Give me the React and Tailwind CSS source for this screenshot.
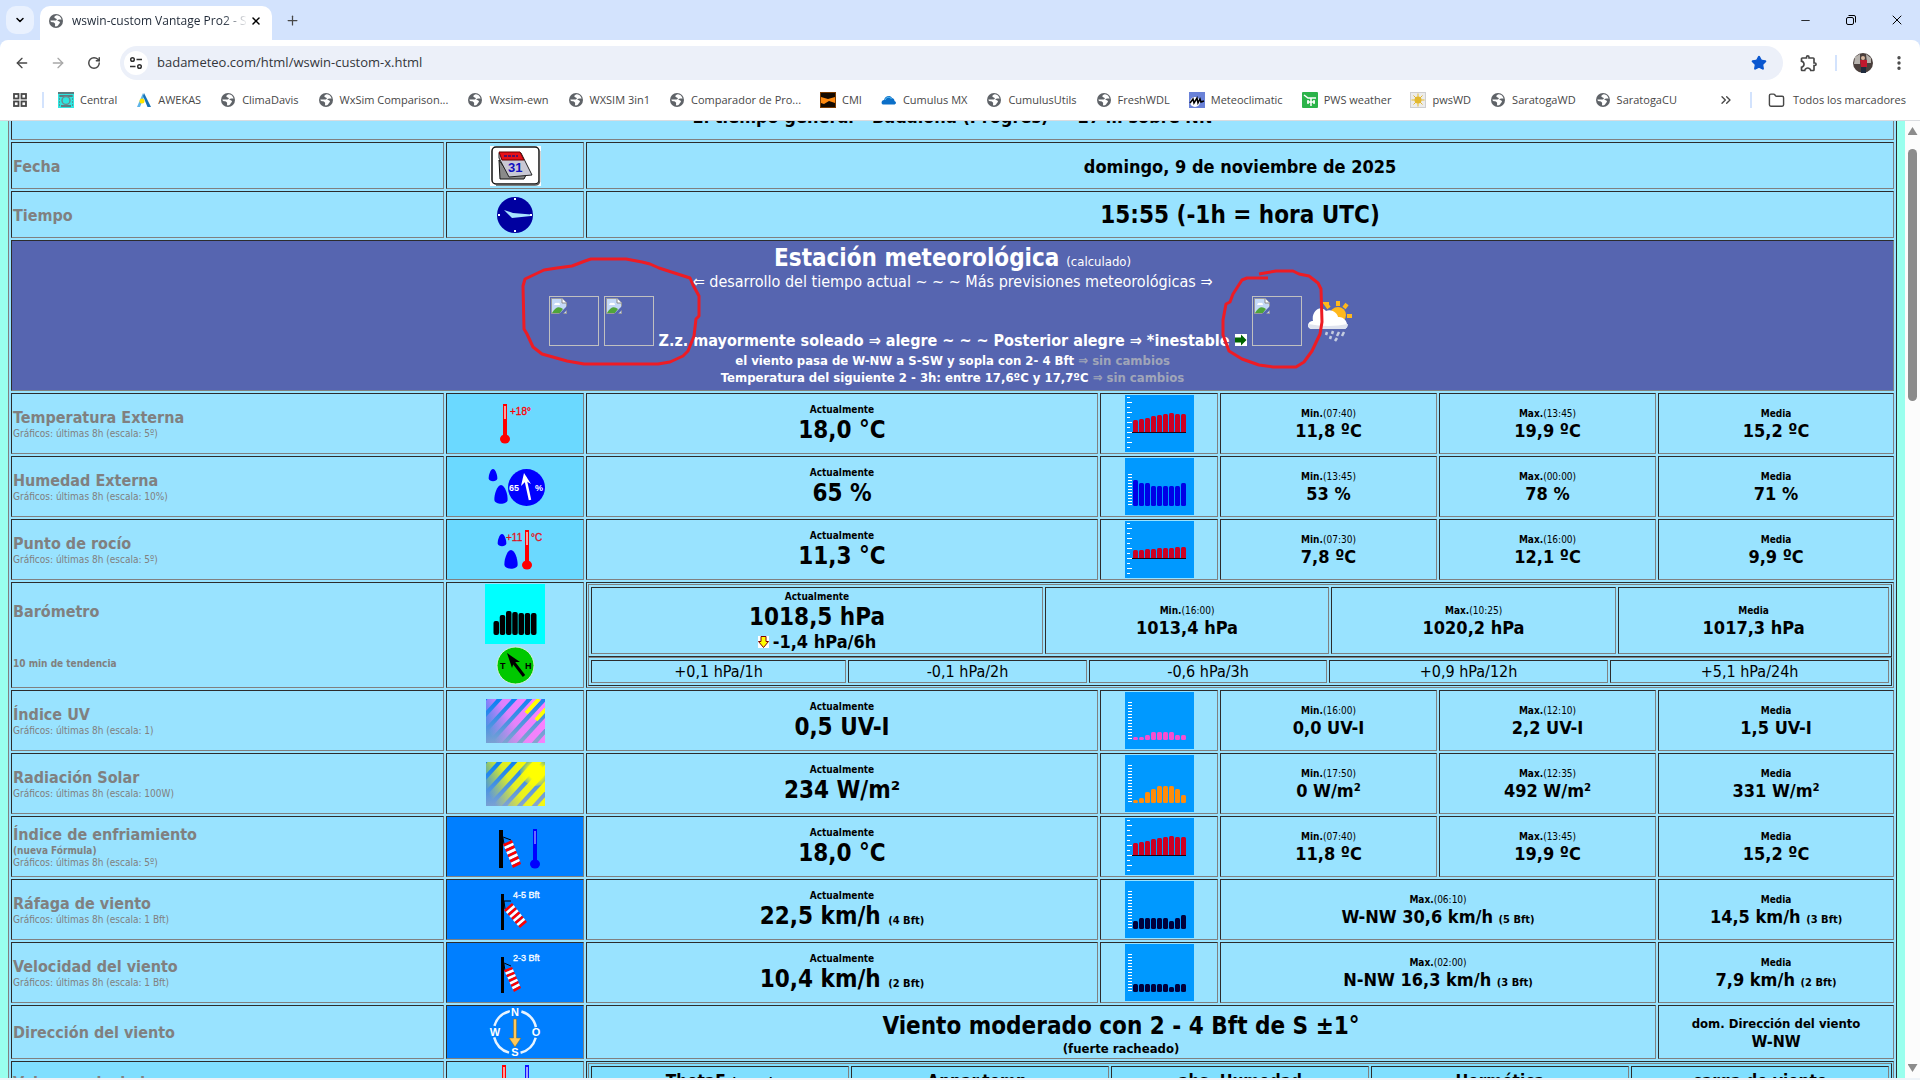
import React from "react";
import { ArrowLeft, ArrowRight, RotateCw, Plus, X, Minus, Star, ChevronDown, ChevronsRight, Folder, EllipsisVertical } from "lucide-react";
import { MdOutlineExtension } from "react-icons/md";

/* ── SHARED CLASSES ── */
const INSET = "border border-t-[#2c2c2c] border-l-[#2c2c2c] border-b-[#808080] border-r-[#808080] p-px";
const OUTSET = "border border-t-[#808080] border-l-[#808080] border-b-[#2c2c2c] border-r-[#2c2c2c]";
const TABLE = "w-full table-fixed border-separate border-spacing-0.5";

/* ── BOOKMARK ICONS ── */
const Globe = () => (
  <svg className="size-4 shrink-0" viewBox="0 0 16 16">
    <circle cx="8" cy="8" r="7" fill="#5f6368" />
    <path d="M9 2.2 C6 3 5.6 4.6 7.6 5.4 C9.6 6 9 7.4 7 7.4 L2.4 7.6 C2.6 10 5 9 6.4 10 C8 11 6.4 12 7.4 13.6 C10 13.6 10.4 11.6 11.6 10.2 C12.8 8.8 11 8.2 9.8 8 C8.8 7.6 10 6.4 11.6 6.6 L13.6 6.6 C13 4 11.4 2.6 9 2.2Z" fill="#fff" />
  </svg>
);

const CentralIcon = () => (
  <svg className="size-4 shrink-0" viewBox="0 0 16 16">
    <rect width="16" height="16" fill="#2ee6e0" />
    <path d="M0 1h16M2 4h12M3 14h10" stroke="#5d7c80" strokeWidth="2" />
    <circle cx="8" cy="8.5" r="4" fill="none" stroke="#6b8a8e" strokeWidth="1.5" />
    <path d="M1.5 3v12M14.500 3v12" stroke="#4b9c9c" strokeDasharray="2 1" />
  </svg>
);

const AwekasIcon = () => (
  <svg className="size-4 shrink-0" viewBox="0 0 16 16">
    <path d="M7 1 L1 15 H4 L8 5Z" fill="#5db4e8" />
    <path d="M8 1 L15 15 H11.500 L7 4Z" fill="#1673b8" />
    <circle cx="6" cy="9" r="2.500" fill="#ffe600" />
  </svg>
);

const CmiIcon = () => (
  <svg className="size-4 shrink-0" viewBox="0 0 16 16">
    <rect width="16" height="16" fill="#150a00" />
    <path d="M1 5 L8 7 L15 5 V11 L9 9 L4 12 L1 11Z" fill="#ff8a10" />
    <rect x="0.5" y="0.5" width="15" height="15" fill="none" stroke="#7a3b00" />
  </svg>
);

const CumulusIcon = () => (
  <svg className="size-4 shrink-0" viewBox="0 0 16 16">
    <path d="M2 12.500 C0 12 0 8.500 3 8 C4 4 9 2.500 11 6 C13 6.500 13.500 8 13.500 9 C16 10 15 12.500 13 12.500Z" fill="#0b6fc8" />
    <path d="M4 8 C5 5 9 4 10.500 7" stroke="#5fc3f5" fill="none" />
  </svg>
);

const MeteoclimaticIcon = () => (
  <svg className="size-4 shrink-0" viewBox="0 0 16 16">
    <rect width="16" height="16" fill="#6a82d8" />
    <circle cx="6" cy="10" r="5" fill="#fff" />
    <path d="M1 11 L4 7 L5 11 L8 6 L9 11 L11 7 L12 10 L15 9" stroke="#000" strokeWidth="1.500" fill="none" />
  </svg>
);

const PwsIcon = () => (
  <svg className="size-4 shrink-0" viewBox="0 0 16 16">
    <rect width="16" height="16" rx="1" fill="#2cb34a" />
    <path d="M2 3 L6 6 H14 M9 6 V14 M5 10 H13 M6 8 V12 M12 8 V12" stroke="#fff" strokeWidth="1.500" fill="none" />
  </svg>
);

const SunIcon = () => (
  <svg className="size-4 shrink-0" viewBox="0 0 16 16">
    <rect x="0.5" y="0.5" width="15" height="15" fill="#ececec" stroke="#cfcfcf" />
    <circle cx="8" cy="8" r="3.500" fill="#e3b92f" />
    <path d="M8 1.500V14.500M1.500 8H14.500M3.500 3.500L12.500 12.500M12.500 3.500L3.500 12.500" stroke="#e3b92f" />
  </svg>
);

const BOOKMARKS = [
  { label: "Central", icon: CentralIcon },
  { label: "AWEKAS", icon: AwekasIcon },
  { label: "ClimaDavis", icon: Globe },
  { label: "WxSim Comparison...", icon: Globe },
  { label: "Wxsim-ewn", icon: Globe },
  { label: "WXSIM 3in1", icon: Globe },
  { label: "Comparador de Pro...", icon: Globe },
  { label: "CMI", icon: CmiIcon },
  { label: "Cumulus MX", icon: CumulusIcon },
  { label: "CumulusUtils", icon: Globe },
  { label: "FreshWDL", icon: Globe },
  { label: "Meteoclimatic", icon: MeteoclimaticIcon },
  { label: "PWS weather", icon: PwsIcon },
  { label: "pwsWD", icon: SunIcon },
  { label: "SaratogaWD", icon: Globe },
  { label: "SaratogaCU", icon: Globe },
];

/* ── SENSOR ICONS ── */
const Thermometer = ({ x, y, color = "#ff0000", light = "#ff9c9c" }) => (
  <g>
    <rect x={x - 2} y={y} width="4" height="33" fill={color} />
    <rect x={x - 1} y={y + 2} width="2" height="13" fill={light} />
    <ellipse cx={x} cy={y + 35} rx="5" ry="4.500" fill={color} />
  </g>
);

const Drop = ({ x, y, h }) => (
  <path
    d={`M${x} ${y} C${x + h * 0.2} ${y} ${x + h * 0.35} ${y + h * 0.5} ${x + h * 0.33} ${y + h * 0.75} C${x + h * 0.3} ${y + h} ${x - h * 0.3} ${y + h} ${x - h * 0.33} ${y + h * 0.75} C${x - h * 0.35} ${y + h * 0.5} ${x - h * 0.2} ${y} ${x} ${y}Z`}
    fill="#0000ff"
  />
);

const IconBox = ({ children }) => (
  <svg className="mx-auto h-14 w-15 font-[family-name:'Liberation_Sans',sans-serif]" viewBox="0 0 60 56">{children}</svg>
);

const TempIcon = () => (
  <IconBox>
    <Thermometer x={20} y={8} />
    <text x="25" y="19" fontSize="10" fill="#ff0000" stroke="#ff0000" strokeWidth="0.3">+18°</text>
  </IconBox>
);

const HumidityIcon = () => (
  <IconBox>
    <Drop x={8} y={10} h={13} />
    <Drop x={16} y={26} h={20} />
    <circle cx="41.500" cy="28.500" r="18.500" fill="#0000ff" />
    <path d="M45 41 L40 18" stroke="#fff" strokeWidth="2.500" />
    <path d="M39 14 L46 25 L41 22 L36 27Z" fill="#fff" />
    <text x="24" y="32" fontSize="9" fontWeight="bold" fill="#fff">65</text>
    <text x="50" y="32" fontSize="9" fontWeight="bold" fill="#fff">%</text>
  </IconBox>
);

const DewIcon = () => (
  <IconBox>
    <Drop x={17} y={12} h={13} />
    <Drop x={26} y={28} h={20} />
    <Thermometer x={42} y={8} />
    <text x="21" y="19" fontSize="10" fill="#e01020" stroke="#e01020" strokeWidth="0.3">+11</text>
    <text x="46" y="19" fontSize="10" fill="#e01020" stroke="#e01020" strokeWidth="0.3">°C</text>
  </IconBox>
);

const BARO_TOPS = [37, 31, 27, 28, 29, 29, 29];

const BarometerIcon = () => (
  <svg className="mx-auto h-[102px] w-15 font-[family-name:'Liberation_Sans',sans-serif]" viewBox="0 0 60 102">
    <rect width="60" height="60" fill="#00ffff" />
    {BARO_TOPS.map((top, i) => (
      <rect key={i} x={8.500 + i * 6.250} y={top} width="5.500" height={51 - top} rx="2" fill="#000" />
    ))}
    <circle cx="30.500" cy="81.500" r="18.500" fill="#00c800" stroke="#d8f0d8" />
    <path d="M39 92 L26 75" stroke="#000" strokeWidth="3" />
    <path d="M22 69 L35 78 L29 78 L27 84Z" fill="#000" />
    <text x="15" y="85" fontSize="9" fontWeight="bold">T</text>
    <text x="40" y="85" fontSize="9" fontWeight="bold">H</text>
  </svg>
);

const Rays = ({ id, color, spot }) => (
  <svg className="mx-auto h-11 w-[59px]" viewBox="0 0 59 44">
    <defs>
      <linearGradient id={`${id}-sky`} x1="0.3" y1="0" x2="0.5" y2="1">
        <stop offset="0" stopColor="#0a80f5" />
        <stop offset="1" stopColor="#84a4d0" />
      </linearGradient>
      <linearGradient id={`${id}-ray`} gradientUnits="userSpaceOnUse" x1="54" y1="6" x2="6" y2="38">
        <stop offset="0" stopColor={color} />
        <stop offset="0.55" stopColor={color} stopOpacity="0.85" />
        <stop offset="1" stopColor={color} stopOpacity="0" />
      </linearGradient>
      <radialGradient id={`${id}-sun`} gradientUnits="userSpaceOnUse" cx="50" cy="10" r="18">
        <stop offset="0.4" stopColor="#ffff00" />
        <stop offset="1" stopColor="#ffff00" stopOpacity="0" />
      </radialGradient>
      <clipPath id={`${id}-clip`}><rect width="59" height="44" /></clipPath>
    </defs>
    <rect width="59" height="44" fill={`url(#${id}-sky)`} />
    <g clipPath={`url(#${id}-clip)`}>
      {Array.from({ length: 9 }).map((_, i) => (
        <path key={i} d={`M${i * 15 - 36} 46 l44 -48`} stroke={`url(#${id}-ray)`} strokeWidth="7" />
      ))}
      {spot === "full" && <circle cx="50" cy="8" r="16" fill={`url(#${id}-sun)`} />}
      {spot === "thin" && <path d="M40 14 L53 0 M50 21 L60 10" stroke="#ffff00" strokeWidth="4" />}
    </g>
  </svg>
);

const UvIcon = () => <Rays id="uv" color="#ff80ff" spot="thin" />;
const SolarIcon = () => <Rays id="solar" color="#ffff00" spot="full" />;

/* striped windsock: four corners a-b (mouth) and c-d (tail) */
const Sock = ({ a, b, c, d }) => {
  const mix = (p, q, t) => `${p[0] + (q[0] - p[0]) * t},${p[1] + (q[1] - p[1]) * t}`;
  return (
    <g>
      {Array.from({ length: 9 }).map((_, i) => (
        <polygon
          key={i}
          points={`${mix(a, d, i / 9)} ${mix(b, c, i / 9)} ${mix(b, c, (i + 1) / 9)} ${mix(a, d, (i + 1) / 9)}`}
          fill={i % 2 ? "#ffffff" : "#ff0000"}
        />
      ))}
    </g>
  );
};

const ChillIcon = () => (
  <IconBox>
    <rect x="14" y="11" width="4" height="38" fill="#000" />
    <path d="M18 18 L26 21 M18 19 L19 25" stroke="#000" fill="none" />
    <Sock a={[18, 25]} b={[27, 21]} c={[36, 45]} d={[28, 49]} />
    <Thermometer x={50} y={10} color="#0000ff" light="#6a6aff" />
  </IconBox>
);

const GustIcon = () => (
  <IconBox>
    <rect x="16" y="12" width="3" height="36" fill="#000" />
    <path d="M19 19 H26 M19 19 L20 27" stroke="#000" fill="none" />
    <Sock a={[19, 28]} b={[27, 21]} c={[42, 40]} d={[35, 46]} />
    <text x="28" y="16" fontSize="9" fill="#fff" stroke="#fff" strokeWidth="0.3">4-5 Bft</text>
  </IconBox>
);

const SpeedIcon = () => (
  <IconBox>
    <rect x="16" y="12" width="3" height="36" fill="#000" />
    <path d="M19 18 L26 21 M19 19 L20 26" stroke="#000" fill="none" />
    <Sock a={[19, 25]} b={[27, 22]} c={[36, 43]} d={[29, 47]} />
    <text x="28" y="16" fontSize="9" fill="#fff" stroke="#fff" strokeWidth="0.3">2-3 Bft</text>
  </IconBox>
);

const CompassIcon = () => (
  <svg className="mx-auto h-[50px] w-15 font-[family-name:'Liberation_Sans',sans-serif]" viewBox="0 0 60 50">
    <circle cx="30" cy="25" r="21.500" fill="none" stroke="#e8f4ff" strokeWidth="2.500" strokeDasharray="22 11.770" strokeDashoffset="-5.880" />
    <path d="M28.500 12 H31.500 V31 H36 L30 40 L24 31 H28.500Z" fill="#ffc85a" stroke="#7d6a2a" strokeWidth="0.5" />
    <g fontSize="11" fontWeight="bold" fill="#fff" textAnchor="middle">
      <text x="30" y="9">N</text>
      <text x="30" y="49">S</text>
      <text x="10" y="29">W</text>
      <text x="51" y="29">O</text>
    </g>
  </svg>
);

const CalendarIcon = () => (
  <svg className="mx-auto h-10 w-[51px] font-[family-name:'Liberation_Sans',sans-serif]" viewBox="0 0 51 40">
    <rect width="51" height="40" fill="#fff" />
    <rect x="2" y="1" width="47" height="37" rx="4" fill="#fff" stroke="#111" strokeWidth="1.500" />
    <path d="M49.500 5 V36 Q49 39 45 39 H6" fill="none" stroke="#555" strokeWidth="1.500" />
    <path d="M9 14 L10 33 H34 L36 29 L18 27Z" fill="#8a8a8a" stroke="#111" />
    <path d="M9 7 H31 L42 29 L19 31 L9 12Z" fill="#c9c9d4" stroke="#222" />
    <path d="M9 6 H30 L34 14 H12Z" fill="#e81018" stroke="#600" />
    <path d="M14 10 h14" stroke="#5a1060" strokeWidth="2" strokeDasharray="3 1" />
    <text x="18" y="26" fontSize="13" fontWeight="bold" fill="#1010c0">31</text>
  </svg>
);

const ClockIcon = () => (
  <svg className="mx-auto h-10 w-10" viewBox="0 0 40 40">
    <circle cx="20" cy="20" r="18" fill="#0000a0" />
    <path d="M9 15 L18 18 L36 19.500 V21 L17 23Z" fill="#a8e4ff" />
    <path d="M20 3v2M20 35v2M3 20h2M35 20h2" stroke="#fff" strokeWidth="2" />
  </svg>
);

/* ── MINI BAR CHART (last 8 hours) ── */
const LONG_TICKS = [2, 7, 12, 17, 22, 27, 32, 37, 42, 47, 52];

const MiniChart = ({ color, tops, kind }) => {
  const axis = kind === "temp";
  const bottom = axis ? 37 : 48;
  const first = kind === "percent" ? 16 : 10;
  const ticks = axis ? LONG_TICKS : Array.from({ length: (46 - first) / 3 + 1 }).map((_, i) => first + i * 3);
  return (
    <svg className="mx-auto h-[57px] w-[69px]" viewBox="0 0 69 57">
      <rect width="69" height="57" fill="#0099ff" />
      {ticks.map((y, i) => (
        <rect key={y} x={axis ? 2 : 3} y={y} width={axis && i % 2 === 0 ? 3 : axis ? 5 : 4} height="1" fill="#fff" />
      ))}
      {tops.map((top, i) => (
        <g key={i}>
          <rect x={8 + i * 6} y={top} width="5" height={bottom - top} rx="1.500" fill={color} />
          {axis && <rect x={8 + i * 6} y="34" width="5" height="3" fill={color} />}
        </g>
      ))}
      {axis && <rect x="7" y="37" width="54" height="1" fill="#200010" />}
    </svg>
  );
};

/* ── DATA ── */
const WARM = [25, 24, 23, 21, 20, 19, 18, 19, 19];

const TOP_ROWS = [
  {
    name: "Temperatura Externa", scale: "5º", icon: TempIcon, tone: "light", now: "18,0 °C",
    chart: { kind: "temp", color: "#cc0022", tops: WARM },
    min: ["07:40", "11,8 ºC"], max: ["13:45", "19,9 ºC"], avg: "15,2 ºC",
  },
  {
    name: "Humedad Externa", scale: "10%", icon: HumidityIcon, tone: "light", now: "65 %",
    chart: { kind: "percent", color: "#0000e6", tops: [22, 25, 25, 28, 28, 28, 28, 28, 25] },
    min: ["13:45", "53 %"], max: ["00:00", "78 %"], avg: "71 %",
  },
  {
    name: "Punto de rocío", scale: "5º", icon: DewIcon, tone: "light", now: "11,3 °C",
    chart: { kind: "temp", color: "#cc0022", tops: [29, 29, 28, 28, 27, 27, 27, 26, 26] },
    min: ["07:30", "7,8 ºC"], max: ["16:00", "12,1 ºC"], avg: "9,9 ºC",
  },
];

const BOTTOM_ROWS = [
  {
    name: "Índice UV", scale: "1", icon: UvIcon, now: "0,5 UV-I",
    chart: { kind: "scale", color: "#f54fd0", tops: [45, 45, 43, 40, 40, 40, 40, 43, 43] },
    min: ["16:00", "0,0 UV-I"], max: ["12:10", "2,2 UV-I"], avg: "1,5 UV-I",
  },
  {
    name: "Radiación Solar", scale: "100W", icon: SolarIcon, now: "234 W/m²",
    chart: { kind: "scale", color: "#ff8c0a", tops: [45, 43, 37, 34, 31, 31, 31, 34, 40] },
    min: ["17:50", "0 W/m²"], max: ["12:35", "492 W/m²"], avg: "331 W/m²",
  },
  {
    name: "Índice de enfriamiento", note: "(nueva Fórmula)", scale: "5º", icon: ChillIcon, tone: "blue", now: "18,0 °C",
    chart: { kind: "temp", color: "#cc0022", tops: WARM },
    min: ["07:40", "11,8 ºC"], max: ["13:45", "19,9 ºC"], avg: "15,2 ºC",
  },
  {
    name: "Ráfaga de viento", scale: "1 Bft", icon: GustIcon, tone: "blue", now: "22,5 km/h", nowBft: "(4 Bft)",
    chart: { kind: "scale", color: "#00003c", tops: [40, 37, 37, 37, 37, 37, 40, 37, 34] },
    max: ["06:10", "W-NW 30,6 km/h", "(5 Bft)"], avg: "14,5 km/h", avgBft: "(3 Bft)",
  },
  {
    name: "Velocidad del viento", scale: "1 Bft", icon: SpeedIcon, tone: "blue", now: "10,4 km/h", nowBft: "(2 Bft)",
    chart: { kind: "scale", color: "#00003c", tops: [40, 40, 40, 40, 40, 40, 43, 40, 40] },
    max: ["02:00", "N-NW 16,3 km/h", "(3 Bft)"], avg: "7,9 km/h", avgBft: "(2 Bft)",
  },
];

const TONES = { light: "bg-[#6bd9ff]", blue: "bg-[#007fff]" };

/* ── TABLE PIECES ── */
const Bft = ({ children }) => <span className="text-[11px] leading-none"> {children}</span>;

const Stat = ({ label, time, value, bft }) => (
  <>
    <div className="pt-0.5 text-[10px] leading-3"><b>{label}</b>{time && `(${time})`}</div>
    <div className="text-lg leading-[22px] font-bold">{value}{bft && <> <Bft>{bft}</Bft></>}</div>
  </>
);

const Current = ({ value, bft }) => (
  <>
    <div className="pt-0.5 text-[10px] leading-3 font-bold">Actualmente</div>
    <div className="text-2xl leading-[29px] font-bold">{value}{bft && <> <Bft>{bft}</Bft></>}</div>
  </>
);

const RowLabel = ({ children }) => (
  <th scope="row" className={`${INSET} text-left font-normal text-[#808080]`}>{children}</th>
);

const SensorRow = ({ row }) => {
  const Icon = row.icon;
  return (
    <tr className="h-[61px]">
      <RowLabel>
        <div className="text-base leading-5 font-bold">{row.name}</div>
        {row.note && <div className="text-[10px] leading-3 font-bold">{row.note}</div>}
        <div className="text-[10px] leading-3">Gráficos: últimas 8h (escala: {row.scale})</div>
      </RowLabel>
      <td className={`${INSET} ${TONES[row.tone] || ""}`}><Icon /></td>
      <td className={INSET}><Current value={row.now} bft={row.nowBft} /></td>
      <td className={INSET}><MiniChart {...row.chart} /></td>
      {row.min && <td className={INSET}><Stat label="Min." time={row.min[0]} value={row.min[1]} /></td>}
      <td className={INSET} colSpan={row.min ? 1 : 2}>
        <Stat label="Max." time={row.max[0]} value={row.max[1]} bft={row.max[2]} />
      </td>
      <td className={INSET}><Stat label="Media" value={row.avg} bft={row.avgBft} /></td>
    </tr>
  );
};

const BarometerRow = () => (
  <tr className="h-[106px]">
    <RowLabel>
      <div className="flex flex-col gap-9 pt-0.5">
        <span className="text-base leading-5 font-bold">Barómetro</span>
        <span className="text-[10px] leading-3 font-bold">10 min de tendencia</span>
      </div>
    </RowLabel>
    <td className={INSET}><BarometerIcon /></td>
    <td className={INSET} colSpan={5}>
      <table className={`${TABLE} ${OUTSET}`}>
        <colgroup>
          <col className="w-[452px]" />
          <col className="w-[284px]" />
          <col className="w-[285px]" />
          <col className="w-[271px]" />
        </colgroup>
        <tbody>
          <tr className="h-[67px]">
            <td className={INSET}>
              <Current value="1018,5 hPa" />
              <div className="text-lg leading-5 font-bold">
                <svg className="mr-1 inline h-3 w-[11px] align-baseline" viewBox="0 0 11 12">
                  <rect width="11" height="12" fill="#fff" />
                  <path d="M3 0.5 H8 V5.500 H10.500 L5.500 11.500 L0.5 5.500 H3Z" fill="#ffff00" stroke="#800000" />
                </svg>
                -1,4 hPa/6h
              </div>
            </td>
            <td className={INSET}><Stat label="Min." time="16:00" value="1013,4 hPa" /></td>
            <td className={INSET}><Stat label="Max." time="10:25" value="1020,2 hPa" /></td>
            <td className={INSET}><Stat label="Media" value="1017,3 hPa" /></td>
          </tr>
        </tbody>
      </table>
      <table className={`${TABLE} ${OUTSET}`}>
        <colgroup>
          <col className="w-[255px]" />
          <col className="w-[239px]" />
          <col className="w-[238px]" />
          <col className="w-[279px]" />
          <col className="w-[279px]" />
        </colgroup>
        <tbody>
          <tr className="h-[23px]">
            {["+0,1 hPa/1h", "-0,1 hPa/2h", "-0,6 hPa/3h", "+0,9 hPa/12h", "+5,1 hPa/24h"].map((t) => (
              <td key={t} className={`${INSET} text-base leading-[19px]`}>{t}</td>
            ))}
          </tr>
        </tbody>
      </table>
    </td>
  </tr>
);

const MissingImage = () => (
  <svg className="mr-[5px] inline size-[50px] align-baseline" viewBox="0 0 50 50">
    <rect x="0.5" y="0.5" width="49" height="49" fill="none" stroke="#c0c0c0" />
    <path d="M2.500 2.500 H13 L17.500 7 V17.500 H2.500Z" fill="#c5d9f7" stroke="#9a9a9a" />
    <path d="M5 9 Q6 6 8 7 Q11 6 11 9Z" fill="#fff" />
    <path d="M3 17 Q8 8 14 13 L11 17Z" fill="#4fa53a" />
    <path d="M10 18 L18 10 V14 L14 18Z" fill="#5665b0" />
    <path d="M13 2.500 V7 H17.500" fill="#fff" stroke="#8a8a8a" />
  </svg>
);

const RainIcon = () => (
  <svg className="inline size-[50px] align-baseline" viewBox="3 0 50 50">
    <circle cx="34" cy="19" r="8" fill="#ffb81c" />
    <path d="M34 5 v5 M43 8 l-3 4 M25 8 l-3 -0 3 4 M48 20 h-5" stroke="#ffb81c" strokeWidth="4" />
    <path d="M8 33 C2 33 3 25 9 25 C7 16 16 8 22 15 C28 12 34 18 34 21 C42 20 46 31 41 33Z" fill="#fff" />
    <path d="M8 33 H41 C43 32 44 30 44 28 Q25 32 4 28 Q4 32 8 33Z" fill="#dfe3ee" />
    <path d="M23 36 l-1 3 M29 35 l-1 3 M35 36 l-2 4 M40 36 l-2 4 M27 40 l-1 3 M33 42 l-2 3" stroke="#c5cde0" strokeWidth="2.500" />
  </svg>
);

const MARK_LEFT = "M522 285 L524 278 L543 269 L556 267 L571 265 L584 260 L590 258 L625 258 L641 261 L649 263 L658 267 L689 277 L692 284 L698 295 L698 315 L695 318 L693 335 L687 350 L682 355 L669 361 L657 363 L583 363 L566 360 L541 353 L532 346 L526 333 L523 328Z";
const MARK_RIGHT = "M1267 277 L1246 277 L1241 279 L1232 293 L1229 301 L1225 303 L1222 319 L1222 334 L1228 350 L1241 358 L1258 364 L1272 366 L1295 366 L1303 361 L1311 350 L1319 333 L1321 321 L1320 288 L1317 282 L1308 275 L1298 273 L1292 270 L1275 270 L1258 273";

const StationRow = () => (
  <tr className="h-[151px]">
    <td colSpan={7} className={`${INSET} relative bg-[#5665b0] align-top text-white`}>
      <div className="pt-0.5 text-2xl leading-[29px]">
        <b>Estación meteorológica</b> <span className="text-[13px] leading-none">(calculado)</span>
      </div>
      <div className="text-base leading-[18px]">⇐ desarrollo del tiempo actual ~ ~ ~ Más previsiones meteorológicas ⇒</div>
      <div className="pt-[5px] text-base leading-[22px] font-bold whitespace-nowrap">
        <MissingImage />
        <MissingImage />
        Z.z. mayormente soleado ⇒ alegre ~ ~ ~ Posterior alegre ⇒ *inestable{" "}
        <svg className="mr-[5px] inline size-3 align-baseline" viewBox="0 0 12 12">
          <rect width="12" height="12" fill="#fff" />
          <path d="M0 3.500 H6 V0.5 L11.500 6 L6 11.500 V8.500 H0Z" fill="#006400" />
        </svg>
        <MissingImage />
        <RainIcon />
      </div>
      <div className="text-[13px] leading-[17px] font-bold">
        el viento pasa de W-NW a S-SW y sopla con 2- 4 Bft <span className="text-[#a0a5b8]">⇒ sin cambios</span>
      </div>
      <div className="text-[13px] leading-[17px] font-bold">
        Temperatura del siguiente 2 - 3h: entre 17,6ºC y 17,7ºC <span className="text-[#a0a5b8]">⇒ sin cambios</span>
      </div>
      {/* hand-drawn red marks over the missing pictures */}
      <svg className="pointer-events-none absolute top-0 left-1/2 h-[151px] w-[880px] -translate-x-1/2" viewBox="512 240 880 151">
        <path d={MARK_LEFT} fill="none" stroke="#ed1c24" strokeWidth="3" strokeLinejoin="round" />
        <path d={MARK_RIGHT} fill="none" stroke="#ed1c24" strokeWidth="3" strokeLinejoin="round" />
      </svg>
    </td>
  </tr>
);

const CalculatedRow = () => (
  <tr className="h-[106px] bg-[#80dfff]">
    <th scope="row" className={`${INSET} text-left align-top text-[#808080]`}>
      <div className="pt-2.5 text-base leading-5 font-bold">Valores calculados</div>
    </th>
    <td className={`${INSET} align-top`}>
      <svg className="mx-auto h-14 w-15" viewBox="0 0 60 56">
        <Thermometer x={19} y={2} />
        <Thermometer x={42} y={2} color="#1010ff" light="#a0a0ff" />
      </svg>
    </td>
    <td className={`${INSET} align-top`} colSpan={5}>
      <table className={`${TABLE} ${OUTSET}`}>
        <tbody>
          <tr className="h-12">
            <td className={`${INSET} align-top text-[17px] leading-[26px] font-bold`}>ThetaE <span className="text-[13px] leading-none">(27 m)</span></td>
            {["Appar.temp.", "abs. Humedad", "Hermética", "carga de viento"].map((t) => (
              <td key={t} className={`${INSET} align-top text-[17px] leading-[26px] font-bold`}>{t}</td>
            ))}
          </tr>
        </tbody>
      </table>
    </td>
  </tr>
);

/* ── BROWSER CHROME ── */
const TabStrip = () => (
  <div className="flex h-10 shrink-0 items-start bg-[#d3e3fd] pt-1.5 pl-1.5">
    <button aria-label="Buscar pestañas" className="flex size-7 items-center justify-center rounded-[10px] bg-[#e9f1fe]">
      <ChevronDown size={12} strokeWidth={3} />
    </button>
    <div className="ml-1.5 flex h-[34px] w-[232px] items-center rounded-t-[10px] bg-white pb-1 pl-2">
      <Globe />
      <span className="ml-2 flex-1 overflow-hidden bg-linear-to-r from-[#1f2937] from-85% to-white bg-clip-text text-xs whitespace-nowrap text-transparent">wswin-custom Vantage Pro2 - S</span>
      <button aria-label="Cerrar pestaña" className="mr-2 flex size-4 items-center justify-center"><X size={12} strokeWidth={3} /></button>
    </div>
    <button aria-label="Nueva pestaña" className="ml-1.5 flex size-7 items-center justify-center text-[#474747]"><Plus size={15} /></button>
    <div className="ml-auto flex h-7 items-center">
      <button aria-label="Minimizar" className="flex w-[46px] justify-center"><Minus size={13} strokeWidth={1.5} /></button>
      <button aria-label="Restaurar" className="flex w-[46px] justify-center">
        <svg className="size-3" viewBox="0 0 12 12" fill="none" stroke="#000">
          <rect x="1.500" y="3.500" width="7" height="7" rx="1.500" />
          <path d="M3.500 1.500 H9 Q10.500 1.500 10.500 3 V8.500" />
        </svg>
      </button>
      <button aria-label="Cerrar" className="flex w-[46px] justify-center"><X size={16} strokeWidth={1.5} /></button>
    </div>
  </div>
);

const Toolbar = () => (
  <div className="flex h-[46px] shrink-0 items-center bg-[#d3e3fd]">
    <div className="flex h-full flex-1 items-center rounded-t-lg bg-white pr-3 pl-3.5 text-[#474747]">
      <button aria-label="Atrás" className="flex w-4 justify-center"><ArrowLeft size={16} /></button>
      <button aria-label="Adelante" className="ml-5 flex w-4 justify-center text-[#a8a8a8]"><ArrowRight size={16} /></button>
      <button aria-label="Recargar" className="ml-5 flex w-4 justify-center"><RotateCw size={14} strokeWidth={2.5} /></button>
      <div className="ml-[18px] flex h-[34px] flex-1 items-center rounded-full bg-[#ecf0f9] pr-4 pl-1">
        <button aria-label="Información del sitio" className="flex size-6 items-center justify-center rounded-full bg-white">
          <svg className="size-4" viewBox="0 0 16 16" fill="none" stroke="#303030" strokeWidth="1.500">
            <circle cx="4.500" cy="4.500" r="1.800" />
            <path d="M8.500 4.500 H14 M2 11.500 H7.500" />
            <circle cx="11.500" cy="11.500" r="1.800" />
          </svg>
        </button>
        <input aria-label="Dirección" className="ml-[9px] flex-1 bg-transparent text-[13px] text-[#33363b] outline-none" defaultValue="badameteo.com/html/wswin-custom-x.html" />
        <button aria-label="Editar marcador" className="text-[#0b57d0]"><Star size={16} fill="#0b57d0" /></button>
      </div>
      <button aria-label="Extensiones" className="ml-4"><MdOutlineExtension size={20} /></button>
      <span className="ml-4 h-4 w-0.5 bg-[#d3e3fd]" />
      <button aria-label="Perfil" className="ml-4">
        <svg className="size-5" viewBox="0 0 20 20">
          <circle cx="10" cy="10" r="10" fill="#4a3f3c" />
          <path d="M2 4 L7 1 V11 H1Z M13 1 L18 5 V10 H14Z" fill="#b7b3ae" />
          <path d="M7 7 H14 V14 H8Z" fill="#c0182e" />
          <circle cx="10" cy="5" r="2" fill="#d9b8a0" />
          <path d="M8 14 H13 V20 H8Z" fill="#1f2b3d" />
        </svg>
      </button>
      <button aria-label="Menú" className="ml-[17px]"><EllipsisVertical size={18} strokeWidth={2.5} /></button>
    </div>
  </div>
);

const BookmarksBar = () => (
  <nav className="flex h-[35px] shrink-0 items-center border-b border-[#dadce0] bg-white pr-3.5 pb-1.5 pl-3 text-[11px] whitespace-nowrap text-[#474747]">
    <button aria-label="Aplicaciones">
      <svg className="size-4" viewBox="0 0 16 16" fill="none" stroke="#474747" strokeWidth="1.800">
        <rect x="2" y="2" width="4.500" height="4.500" />
        <rect x="9.500" y="2" width="4.500" height="4.500" />
        <rect x="2" y="9.500" width="4.500" height="4.500" />
        <rect x="9.500" y="9.500" width="4.500" height="4.500" />
      </svg>
    </button>
    <span className="mx-3.5 h-4 w-0.5 bg-[#d3e3fd]" />
    <div className="flex gap-[19px]">
      {BOOKMARKS.map(({ label, icon: Icon }) => (
        <a key={label} href="#" className="flex items-center gap-1.5"><Icon />{label}</a>
      ))}
    </div>
    <button aria-label="Más marcadores" className="ml-auto"><ChevronsRight size={16} /></button>
    <span className="mx-4 h-4 w-0.5 shrink-0 bg-[#d3e3fd]" />
    <button className="flex items-center gap-2"><Folder size={17} />Todos los marcadores</button>
  </nav>
);

const Scrollbar = () => (
  <div className="flex w-[15px] shrink-0 flex-col items-center bg-[#fcfcfc] py-1.5">
    <span className="h-2 w-2.5 bg-[#8b8b8b] [clip-path:polygon(50%_0,100%_100%,0_100%)]" />
    <span className="mt-3.5 h-[252px] w-[9px] rounded-full bg-[#8b8b8b]" />
    <span className="mt-auto h-2 w-2.5 bg-[#8b8b8b] [clip-path:polygon(0_0,100%_0,50%_100%)]" />
  </div>
);

export default function App() {
  return (
    <div className="flex h-screen flex-col overflow-hidden bg-white font-[family-name:'Open_Sans',sans-serif]">
      <TabStrip />
      <Toolbar />
      <BookmarksBar />

      {/* ══════════ PAGE ══════════ */}
      <div className="flex min-h-0 flex-1 border-b-2 border-[#eef3f8]">
        <main className="min-w-0 flex-1 overflow-hidden bg-[#99ffee] px-2 font-[family-name:'DejaVu_Sans_Condensed','Noto_Sans',sans-serif] text-black">
          <table className={`${TABLE} ${OUTSET} -mt-[31px] bg-[#99e3ff] text-center`}>
            <colgroup>
              <col className="w-[433px]" />
              <col className="w-[138px]" />
              <col className="w-[512px]" />
              <col className="w-[118px]" />
              <col className="w-[217px]" />
              <col className="w-[217px]" />
              <col className="w-[236px]" />
            </colgroup>
            <tbody>
              <tr className="h-[47px]">
                <th colSpan={7} className={`${INSET} text-lg leading-[22px] font-bold whitespace-pre`}>El tiempo general - Badalona (Progrés)  -  27 m sobre NN</th>
              </tr>
              <tr className="h-[47px]">
                <RowLabel><div className="pt-0.5 text-base leading-5 font-bold">Fecha</div></RowLabel>
                <td className={INSET}><CalendarIcon /></td>
                <td className={INSET} colSpan={5}>
                  <div className="pt-0.5 text-lg leading-[22px] font-bold">domingo, 9 de noviembre de 2025</div>
                </td>
              </tr>
              <tr className="h-[47px]">
                <RowLabel><div className="pt-0.5 text-base leading-5 font-bold">Tiempo</div></RowLabel>
                <td className={INSET}><ClockIcon /></td>
                <td className={INSET} colSpan={5}>
                  <div className="pt-0.5 text-2xl leading-[29px] font-bold">15:55 (-1h = hora UTC)</div>
                </td>
              </tr>
              <StationRow />
              {TOP_ROWS.map((row) => <SensorRow key={row.name} row={row} />)}
              <BarometerRow />
              {BOTTOM_ROWS.map((row) => <SensorRow key={row.name} row={row} />)}
              <tr className="h-[54px]">
                <RowLabel><div className="pt-0.5 text-base leading-5 font-bold">Dirección del viento</div></RowLabel>
                <td className={`${INSET} bg-[#007fff]`}><CompassIcon /></td>
                <td className={INSET} colSpan={4}>
                  <div className="pt-1 text-2xl leading-[29px] font-bold">Viento moderado con 2 - 4 Bft de S ±1°</div>
                  <div className="text-[13px] leading-[15px] font-bold">(fuerte racheado)</div>
                </td>
                <td className={INSET}>
                  <div className="pt-0.5 text-[13px] leading-[17px] font-bold">dom. Dirección del viento</div>
                  <div className="text-base leading-5 font-bold">W-NW</div>
                </td>
              </tr>
              <CalculatedRow />
            </tbody>
          </table>
        </main>
        <Scrollbar />
      </div>
    </div>
  );
}
